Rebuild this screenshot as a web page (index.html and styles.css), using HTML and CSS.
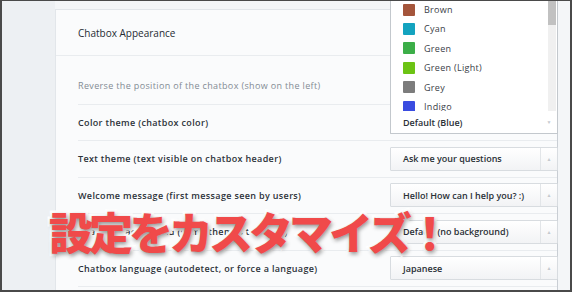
FILE: index.html
```html
<!DOCTYPE html>
<html lang="en">
<head>
    <meta charset="UTF-8">
    <meta name="viewport" content="width=device-width, initial-scale=1.0">
    <title>Chatbox Appearance</title>
    <link rel="stylesheet" href="styles.css">
</head>
<body>
    <div class="frame">
        <div class="sidebar"></div>

        <div class="main">
            <div class="panel">
                <div class="panel-header">Chatbox Appearance</div>

                <div class="panel-body">
                    <div class="row">
                        <span class="label muted">Reverse the position of the chatbox (show on the left)</span>
                    </div>

                    <!-- Color theme: select is open, list drops upward -->
                    <div class="row">
                        <span class="label">Color theme (chatbox color)</span>
                        <div class="select open">
                            <div class="dropdown">
                                <div class="options">
                                    <div class="option"><span class="swatch swatch-black"></span>Black</div>
                                    <div class="option"><span class="swatch swatch-bluegrey"></span>Blue Grey</div>
                                    <div class="option"><span class="swatch swatch-brown"></span>Brown</div>
                                    <div class="option"><span class="swatch swatch-cyan"></span>Cyan</div>
                                    <div class="option"><span class="swatch swatch-green"></span>Green</div>
                                    <div class="option"><span class="swatch swatch-lightgreen"></span>Green (Light)</div>
                                    <div class="option"><span class="swatch swatch-grey"></span>Grey</div>
                                    <div class="option"><span class="swatch swatch-indigo"></span>Indigo</div>
                                </div>
                                <div class="scrollbar"><div class="thumb"></div></div>
                            </div>
                            <span class="select-value">Default (Blue)</span>
                            <span class="open-arrow">▼</span>
                        </div>
                    </div>

                    <div class="row">
                        <span class="label">Text theme (text visible on chatbox header)</span>
                        <div class="select">
                            <span class="select-value">Ask me your questions</span>
                            <span class="select-arrow">▲</span>
                        </div>
                    </div>

                    <div class="row">
                        <span class="label">Welcome message (first message seen by users)</span>
                        <div class="select">
                            <span class="select-value">Hello! How can I help you? :)</span>
                            <span class="select-arrow">▲</span>
                        </div>
                    </div>

                    <div class="row">
                        <span class="label">Chatbox background (some themes to share)</span>
                        <div class="select">
                            <span class="select-value">Default (no background)</span>
                            <span class="select-arrow">▲</span>
                        </div>
                    </div>

                    <div class="row">
                        <span class="label">Chatbox language (autodetect, or force a language)</span>
                        <div class="select">
                            <span class="select-value">Japanese</span>
                            <span class="select-arrow">▲</span>
                        </div>
                    </div>
                </div>
            </div>
        </div>

        <!-- Caption laid over the screenshot -->
        <div class="caption">設定をカスタマイズ！</div>
    </div>
</body>
</html>
```

FILE: styles.css
```css
/* --- Page --- */
body {
    margin: 0;
    background: #fff;
    font-family: "Open Sans", "Liberation Sans", sans-serif;
}

.frame {
    position: relative;
    display: flex;
    width: 572px;
    height: 292px;
    box-sizing: border-box;
    border-style: solid;
    border-color: #4a4a4a;
    border-width: 1px 2px 2px 2px;
    background: #f4f6f8;
    overflow: hidden;
}

.sidebar {
    width: 53px;
    flex-shrink: 0;
    background: #edf0f3;
}

.main {
    flex: 1;
    padding: 8px 12px 0 0;
}

/* --- Panel --- */
.panel {
    background: #fafbfc;
    border: 1px solid #e2e6ea;
    border-right-color: #c9ced4;
    height: 100%;
}

.panel-header {
    height: 45px;
    display: flex;
    align-items: center;
    padding-left: 22px;
    font-size: 10px;
    color: #262b33;
    border-bottom: 1px solid #e9ecef;
}

.panel-body {
    padding-top: 12px;
}

/* --- Rows --- */
.row {
    display: flex;
    align-items: center;
    justify-content: space-between;
    height: 36.5px;
    box-sizing: border-box;
    margin-left: 22px;
    border-bottom: 1px solid #e9ecef;
}

.label {
    font-size: 9px;
    font-weight: 600;
    letter-spacing: 0.35px;
    color: #2c3239;
}

.label.muted {
    font-weight: 400;
    color: #838b94;
}

/* --- Selects --- */
.select {
    position: relative;
    display: flex;
    align-items: center;
    width: 168px;
    height: 24px;
    box-sizing: border-box;
    margin-right: -1px;
    border: 1px solid #d8dce0;
    border-radius: 1px;
    background: linear-gradient(#ffffff, #f2f3f5);
}

.select-value {
    flex: 1;
    padding-left: 12px;
    font-size: 9px;
    font-weight: 600;
    color: #2a3036;
}

.select-arrow {
    width: 16px;
    align-self: stretch;
    display: flex;
    align-items: center;
    justify-content: center;
    border-left: 1px solid #e2e5e8;
    font-size: 5px;
    color: #c6cacf;
}

.select.open {
    background: #fff;
    border-color: #c3c8cd;
    border-top-color: #fff;
}

.open-arrow {
    width: 16px;
    text-align: center;
    font-size: 5px;
    color: #c6cacf;
}

/* --- Open dropdown list --- */
.dropdown {
    position: absolute;
    left: -1px;
    right: -1px;
    bottom: 100%;
    height: 140px;
    display: flex;
    flex-direction: column;
    justify-content: flex-end;
    overflow: hidden;
    background: #fff;
    border: 1px solid #c3c8cd;
    border-bottom: none;
}

.options {
    margin-bottom: -5px;
}

.option {
    display: flex;
    align-items: center;
    gap: 9px;
    height: 19.4px;
    padding-left: 12px;
    font-size: 9px;
    letter-spacing: 0.3px;
    color: #3a4047;
}

.swatch {
    width: 12px;
    height: 12px;
    border-radius: 1px;
}

.swatch-black { background: #222; }
.swatch-bluegrey { background: #607d8b; }
.swatch-brown { background: #a4553b; }
.swatch-cyan { background: #13a3bf; }
.swatch-green { background: #3cae48; }
.swatch-lightgreen { background: #6cc314; }
.swatch-grey { background: #7c7c7c; }
.swatch-indigo { background: #3a4ce0; }

.scrollbar {
    position: absolute;
    top: 0;
    right: 1px;
    bottom: 0;
    width: 8px;
    background: #f0f0f0;
}

.thumb {
    height: 54px;
    background: #c1c1c1;
}

/* --- Caption --- */
.caption {
    position: absolute;
    left: 47px;
    top: 208px;
    font-family: "Noto Sans CJK JP", sans-serif;
    font-size: 44px;
    font-weight: 900;
    line-height: 1;
    letter-spacing: -4px;
    color: #f04a4a;
    -webkit-text-stroke: 5px #fff;
    paint-order: stroke fill;
    text-shadow: 1px 2px 4px rgba(0, 0, 0, 0.45);
}
```
